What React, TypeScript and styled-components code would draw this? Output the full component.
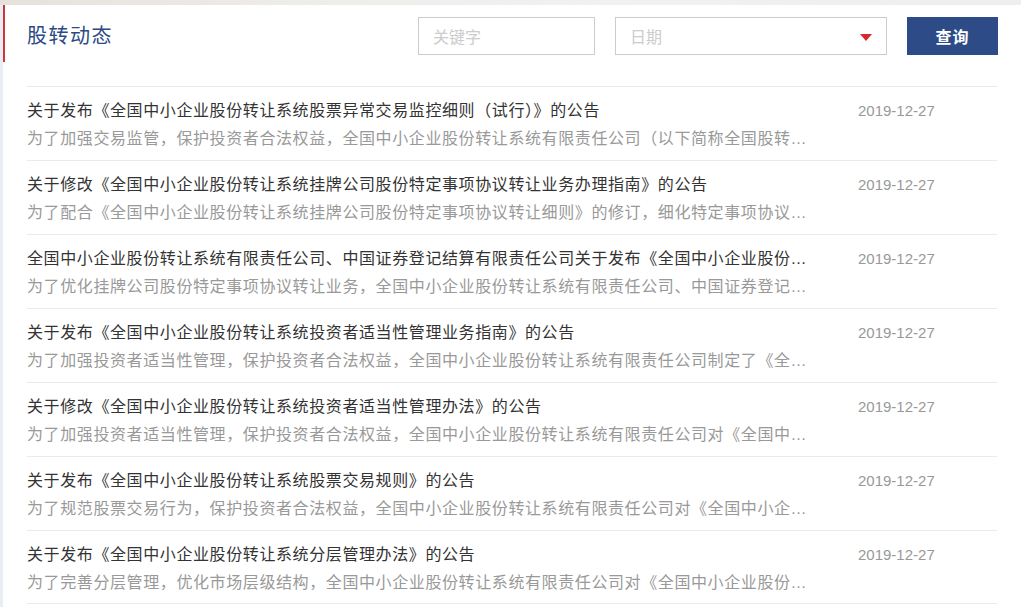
import React from 'react'
import styled, { createGlobalStyle } from 'styled-components'

const GlobalStyle = createGlobalStyle`
  html, body {
    margin: 0;
    padding: 0;
    background: #fff;
  }
  body {
    font-family: "Liberation Sans", "Noto Sans CJK SC", sans-serif;
    -webkit-font-smoothing: antialiased;
  }
  * {
    box-sizing: border-box;
  }
`

const Page = styled.div`
  width: 1021px;
  height: 607px;
  overflow: hidden;
  padding-top: 5px;
  padding-left: 3px;
  background:
    linear-gradient(90deg, #e6e1da 0%, #efedea 30%, #f1f1f0 60%, #efeeec 100%) top / 100% 5px no-repeat,
    #e9eef2;
`

const Panel = styled.div`
  background: #fff;
  height: 100%;
`

const Header = styled.div`
  height: 57px;
  border-left: 2px solid #d2343b;
  padding: 12px 23px 0 22px;
  display: flex;
  align-items: flex-start;
  justify-content: space-between;
`

const Title = styled.h2`
  margin: 0;
  font-family: "Noto Sans CJK SC", sans-serif;
  font-size: 20px;
  font-weight: 400;
  line-height: 36px;
  letter-spacing: 1.5px;
  color: #2b4a84;
`

const Filters = styled.div`
  display: flex;
  gap: 20px;
`

const Field = styled.div<{ $width: number }>`
  position: relative;
  width: ${(p) => p.$width}px;
  height: 38px;
  border: 1px solid #cccccc;
  padding: 0 14px;
  display: flex;
  align-items: center;
  font-family: "Noto Sans CJK SC", sans-serif;
  font-size: 16px;
  color: #cccccc;
`

const Caret = styled.span`
  position: absolute;
  right: 14px;
  top: 16px;
  width: 0;
  height: 0;
  border-left: 6px solid transparent;
  border-right: 6px solid transparent;
  border-top: 7px solid #d9272e;
`

const SearchButton = styled.button`
  width: 91px;
  height: 38px;
  border: 0;
  background: #2c4b87;
  color: #fff;
  font-family: "Noto Sans CJK SC", sans-serif;
  font-size: 16px;
  font-weight: 700;
  letter-spacing: 1px;
  cursor: pointer;
`

const List = styled.ul`
  list-style: none;
  margin: 24px 24px 0 24px;
  padding: 0;
`

const Item = styled.li`
  display: grid;
  grid-template-columns: 1fr 139px;
  border-top: 1px solid #ebebeb;
  padding: 11px 0 7px;
  height: 74px;

  &:last-child {
    border-bottom: 1px solid #ebebeb;
  }
`

const Texts = styled.div`
  min-width: 0;
  width: 780px;
`

const ItemTitle = styled.div`
  font-size: 16px;
  letter-spacing: 0.6px;
  line-height: 26px;
  color: #333;
  white-space: nowrap;
  overflow: hidden;
  text-overflow: ellipsis;
`

const ItemDesc = styled(ItemTitle)`
  line-height: 29px;
  color: #999;
`

const ItemDate = styled.div`
  font-family: "Liberation Sans", sans-serif;
  font-size: 15px;
  line-height: 26px;
  color: #999;
`

const notices = [
  {
    title: '关于发布《全国中小企业股份转让系统股票异常交易监控细则（试行）》的公告',
    desc: '为了加强交易监管，保护投资者合法权益，全国中小企业股份转让系统有限责任公司（以下简称全国股转公司）制定了《全国中小企业股份转让系统股票异常交易监控细则（试行）》',
  },
  {
    title: '关于修改《全国中小企业股份转让系统挂牌公司股份特定事项协议转让业务办理指南》的公告',
    desc: '为了配合《全国中小企业股份转让系统挂牌公司股份特定事项协议转让细则》的修订，细化特定事项协议转让业务办理流程',
  },
  {
    title: '全国中小企业股份转让系统有限责任公司、中国证券登记结算有限责任公司关于发布《全国中小企业股份转让系统挂牌公司股份特定事项协议转让细则》的公告',
    desc: '为了优化挂牌公司股份特定事项协议转让业务，全国中小企业股份转让系统有限责任公司、中国证券登记结算有限责任公司对相关细则进行了修订',
  },
  {
    title: '关于发布《全国中小企业股份转让系统投资者适当性管理业务指南》的公告',
    desc: '为了加强投资者适当性管理，保护投资者合法权益，全国中小企业股份转让系统有限责任公司制定了《全国中小企业股份转让系统投资者适当性管理业务指南》',
  },
  {
    title: '关于修改《全国中小企业股份转让系统投资者适当性管理办法》的公告',
    desc: '为了加强投资者适当性管理，保护投资者合法权益，全国中小企业股份转让系统有限责任公司对《全国中小企业股份转让系统投资者适当性管理办法》进行了修订',
  },
  {
    title: '关于发布《全国中小企业股份转让系统股票交易规则》的公告',
    desc: '为了规范股票交易行为，保护投资者合法权益，全国中小企业股份转让系统有限责任公司对《全国中小企业股份转让系统股票交易规则》进行了修订',
  },
  {
    title: '关于发布《全国中小企业股份转让系统分层管理办法》的公告',
    desc: '为了完善分层管理，优化市场层级结构，全国中小企业股份转让系统有限责任公司对《全国中小企业股份转让系统分层管理办法》进行了修订',
  },
]

export default function App() {
  return (
    <>
      <GlobalStyle />
      <Page>
        <Panel>
          <Header>
            <Title>股转动态</Title>
            <Filters>
              <Field $width={177}>关键字</Field>
              <Field $width={272}>
                日期
                <Caret />
              </Field>
              <SearchButton type="button">查询</SearchButton>
            </Filters>
          </Header>
          <List>
            {notices.map((n, i) => (
              <Item key={i}>
                <Texts>
                  <ItemTitle>{n.title}</ItemTitle>
                  <ItemDesc>{n.desc}</ItemDesc>
                </Texts>
                <ItemDate>2019-12-27</ItemDate>
              </Item>
            ))}
          </List>
        </Panel>
      </Page>
    </>
  )
}
